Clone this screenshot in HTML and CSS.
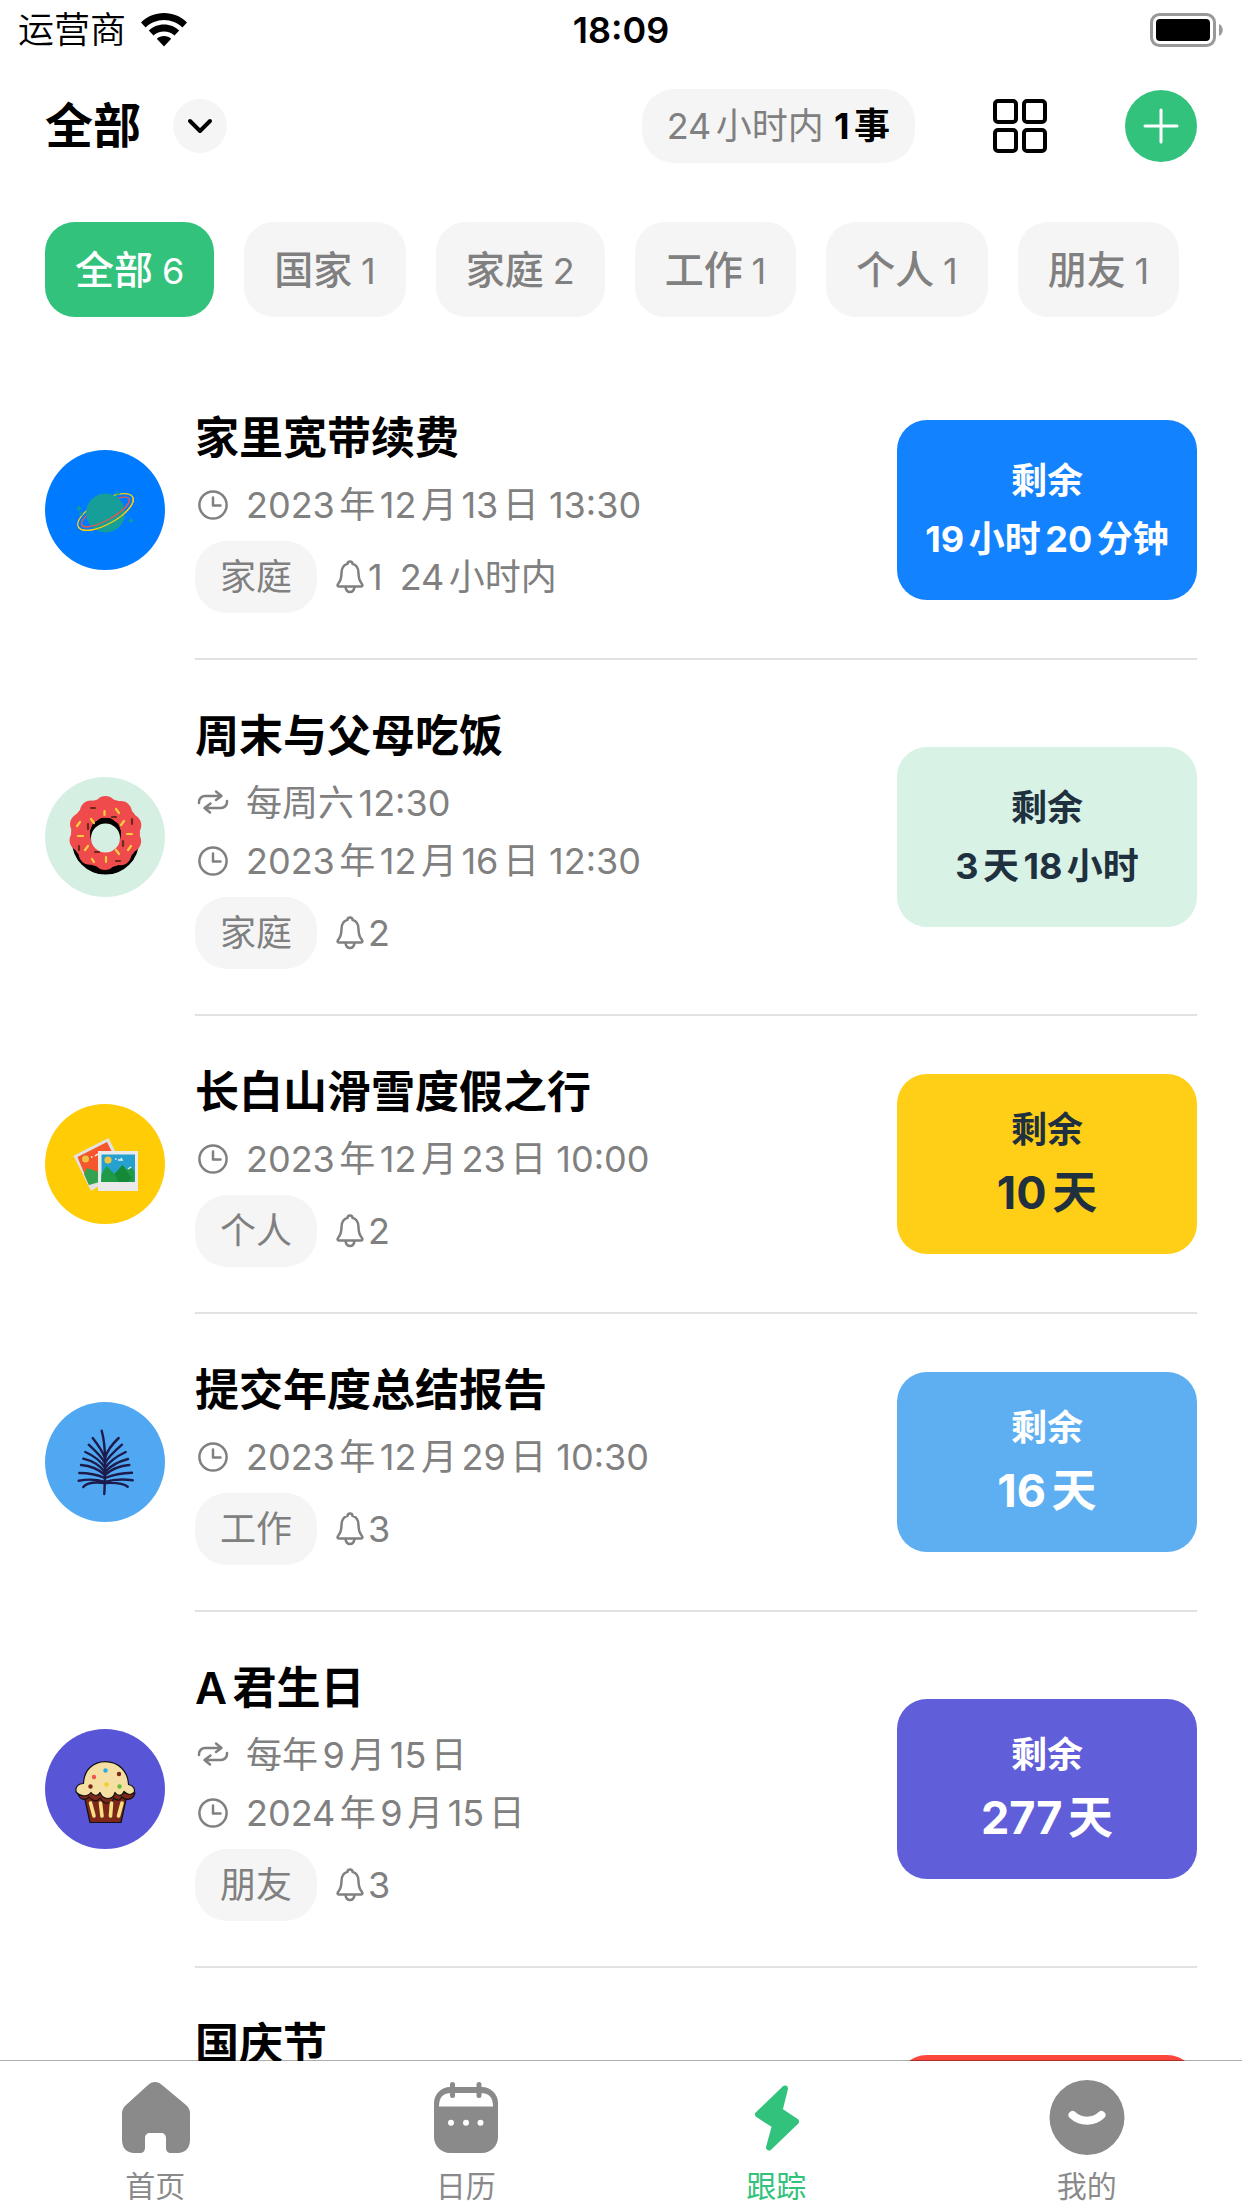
FILE: index.html
```html
<!DOCTYPE html>
<html lang="zh-CN">
<head>
    <meta charset="UTF-8">
    <meta name="viewport" content="width=device-width, initial-scale=1.0">
    <title>跟踪</title>
    <link rel="stylesheet" href="styles.css">
</head>
<body>
    <!-- shared icons -->
    <svg class="sprite" xmlns="http://www.w3.org/2000/svg">
        <symbol id="clock" viewBox="0 0 36 36"><circle cx="18" cy="18" r="13.6"/><path d="M18 10.500v8h7.500"/></symbol>
        <symbol id="repeat" viewBox="0 0 36 36"><path d="M4 18v-1a6 6 0 0 1 6-6h16M21 6.500l5.500 4.500-5.500 4M32 16v1a6 6 0 0 1-6 6H10M15.500 18.500L9.500 23l5.500 4.500"/></symbol>
        <symbol id="bell" viewBox="0 0 30 36"><path d="M15 2.500c-1.500 0-2.500 1-2.500 2.400C8.500 6 6.500 9.500 6.500 14c0 6-1 8-3.300 10.700-1 1.200-1 2.800.8 2.800h22c1.800 0 1.800-1.600.8-2.800C24.500 22 23.500 20 23.500 14c0-4.500-2-8-6-9.100 0-1.400-1-2.400-2.500-2.400zM10.500 28c.5 3.500 2 5 4.500 5s4-1.500 4.500-5"/></symbol>
    </svg>

    <div class="app">
        <div class="status-bar">
            <div class="carrier">
                <span>运营商</span>
                <svg width="46" height="34" viewBox="0 0 46 34"><path d="M23 0C14 0 6 3.500 0 9.500l4.600 5C9.500 9.800 16 7 23 7s13.500 2.800 18.400 7.500l4.600-5C40 3.500 32 0 23 0z"/><path d="M23 11.500c-6 0-11.300 2.300-15.200 6l4.700 5c2.800-2.500 6.500-4 10.500-4s7.700 1.500 10.500 4l4.700-5c-3.900-3.700-9.200-6-15.200-6z"/><path d="M23 23c-2.800 0-5.300 1-7.200 2.700L23 33.500l7.200-7.800C28.300 24 25.800 23 23 23z"/></svg>
            </div>
            <time class="time">18:09</time>
            <svg class="battery" width="74" height="34" viewBox="0 0 74 34"><rect x="1.500" y="1.500" width="63" height="31" rx="8" fill="none" stroke="#999" stroke-width="3"/><rect x="6" y="6" width="54" height="22" rx="4"/><path d="M69 11c5 2 5 10 0 12z" fill="#999"/></svg>
        </div>

        <header class="toolbar">
            <h1>全部</h1>
            <button class="expand" aria-label="展开"><svg width="54" height="54" viewBox="0 0 54 54"><path d="M17 22l10 10 10-10"/></svg></button>
            <div class="soon">24小时内 <b>1事</b></div>
            <button class="grid" aria-label="网格"><svg width="54" height="54" viewBox="0 0 54 54"><rect x="2" y="2" width="21" height="21" rx="3"/><rect x="31" y="2" width="21" height="21" rx="3"/><rect x="2" y="31" width="21" height="21" rx="3"/><rect x="31" y="31" width="21" height="21" rx="3"/></svg></button>
            <button class="add" aria-label="添加"><svg width="72" height="72" viewBox="0 0 72 72"><path d="M36 20v32M20 36h32"/></svg></button>
        </header>

        <nav class="filters">
            <button class="active">全部<span>6</span></button>
            <button>国家<span>1</span></button>
            <button>家庭<span>2</span></button>
            <button>工作<span>1</span></button>
            <button>个人<span>1</span></button>
            <button>朋友<span>1</span></button>
        </nav>

        <main class="list">
            <article class="item">
                <svg class="avatar" viewBox="0 0 120 120">
                    <circle cx="60" cy="60" r="60" fill="#007aff"/>
                    <g fill="none" stroke-width="1.300" transform="rotate(-29 60.500 62)">
                        <ellipse cx="60.500" cy="62" rx="31" ry="12" stroke="#ffcc00"/>
                        <ellipse cx="60.500" cy="62" rx="27" ry="8" stroke="#e05a4e"/>
                    </g>
                    <circle cx="60.500" cy="63" r="19.500" fill="#169e98"/>
                    <g fill="none" stroke-width="1.300" transform="rotate(-29 60.500 62)">
                        <path d="M29.500 62a31 12 0 0 0 62 0" stroke="#ffcc00"/>
                        <path d="M33.500 62a27 8 0 0 0 54 0" stroke="#e05a4e"/>
                    </g>
                    <path d="M72.500 41v5M70 43.500h5M34 56v5M31.500 58.500h5M36 62v4M34 64h4M86 68v5M83.500 70.500h5" stroke="#169e98" stroke-width="1.500"/>
                </svg>
                <div class="detail">
                    <h2>家里宽带续费</h2>
                    <p><svg><use href="#clock"/></svg>2023年12月13日 13:30</p>
                    <div class="tags"><span class="tag">家庭</span><svg><use href="#bell"/></svg>1<span class="within">24小时内</span></div>
                </div>
                <div class="remain blue">剩余<span>19小时20分钟</span></div>
            </article>

            <article class="item">
                <svg class="avatar" viewBox="0 0 120 120">
                    <circle cx="60" cy="60" r="60" fill="#d5f0e3"/>
                    <g fill="none" stroke="#000">
                        <circle cx="60.500" cy="64" r="23.500" stroke-width="20"/>
                        <circle cx="60.500" cy="64" r="24.500" stroke-width="18" stroke-linecap="round" stroke-dasharray="0 15.394"/>
                        <circle cx="60.500" cy="59" r="19" stroke-width="10"/>
                    </g>
                    <g fill="none" stroke="#f04b4c">
                        <circle cx="60.500" cy="56" r="25" stroke-width="19"/>
                        <circle cx="60.500" cy="56" r="26" stroke-width="22" stroke-linecap="round" stroke-dasharray="0 16.336" transform="rotate(-90 60.500 56)"/>
                    </g>
                    <circle cx="60.500" cy="57" r="15.500" fill="#000"/>
                    <circle cx="60.500" cy="61" r="14.500" fill="#d5f0e3"/>
                    <g fill="none" stroke-width="2.200" stroke-linecap="round">
                        <path d="M59.500 34v4M71 32l3 4M46 42l3 4M35 45l-3 4M79 44l-3 4M33 59h5M82 57h5M43 69l-3 4M71 73l3 4M61 80v5M86 69l-3 4M47 82l2 3" stroke="#f3cf3e"/>
                        <path d="M46 31h4M67 40h4M43 47v5M87 42v5M78 64v5M34 69v4M50 75h4M71 84h4" stroke="#6b2a1c"/>
                    </g>
                </svg>
                <div class="detail">
                    <h2>周末与父母吃饭</h2>
                    <p><svg><use href="#repeat"/></svg>每周六12:30</p>
                    <p><svg><use href="#clock"/></svg>2023年12月16日 12:30</p>
                    <div class="tags"><span class="tag">家庭</span><svg><use href="#bell"/></svg>2</div>
                </div>
                <div class="remain mint">剩余<span>3天18小时</span></div>
            </article>

            <article class="item">
                <svg class="avatar" viewBox="0 0 120 120">
                    <circle cx="60" cy="60" r="60" fill="#ffcc05"/>
                    <path d="M28.500 51.700L63.500 34l16 32-33.500 21z" fill="#e2e2e2"/>
                    <path d="M32.500 53L62 38l9 18-27 25z" fill="#f5562b"/>
                    <path d="M42 64l12 4 4 9-14 4-5-11z" fill="#33a351"/>
                    <circle cx="40.500" cy="55" r="3.500" fill="#f0c443"/>
                    <path d="M46 53h1.500M50 52l3-2" stroke="#fff" stroke-width="1.500"/>
                    <rect x="53" y="47" width="40" height="40" fill="#eaeaea"/>
                    <rect x="56.500" y="50.500" width="33.500" height="27.500" fill="#25a0cf"/>
                    <path d="M56.500 70l5-8 8 8 4-4 4-5 5 5 3-3 4 4v11h-33.500z" fill="#1f9a47"/>
                    <path d="M69.500 70l8-9 9 13-4 4h-9z" fill="#148a38"/>
                    <circle cx="63" cy="56" r="3.600" fill="#f0c443"/>
                    <path d="M70 55h1.500M73 56h4l-1-2M83 65l3-2" stroke="#e8f4fa" stroke-width="1.500" fill="none"/>
                </svg>
                <div class="detail">
                    <h2>长白山滑雪度假之行</h2>
                    <p><svg><use href="#clock"/></svg>2023年12月23日 10:00</p>
                    <div class="tags"><span class="tag">个人</span><svg><use href="#bell"/></svg>2</div>
                </div>
                <div class="remain yellow">剩余<span class="big">10天</span></div>
            </article>

            <article class="item">
                <svg class="avatar" viewBox="0 0 120 120">
                    <circle cx="60" cy="60" r="60" fill="#50a8f2"/>
                    <g fill="none" stroke="#1d1b4b" stroke-width="2.400" stroke-linecap="round">
                        <path d="M56.700 28.700C59 37 60 45 60 58c0 12 0 22-.7 34"/>
                        <path d="M47.700 36Q57 48 60 56M43.700 42.700Q56 54 60 61M40.300 50Q54 56 60 66M38.300 56.700Q52 60 60 70M36 63Q50 64 60 73M34.300 71Q48 71 60 76M33.700 78.700Q48 76 60 80M38.300 85Q43 79 60 81"/>
                        <path d="M73.700 36Q63 46 60 56M77 42.700Q64 54 60 61M80.700 50Q66 57 60 66M83 57Q68 61 60 70M84.300 63Q70 64 60 73M87 70.700Q72 71 60 76M87.700 78.300Q72 76 60 80M82.700 84.700Q77 80 60 81"/>
                    </g>
                </svg>
                <div class="detail">
                    <h2>提交年度总结报告</h2>
                    <p><svg><use href="#clock"/></svg>2023年12月29日 10:30</p>
                    <div class="tags"><span class="tag">工作</span><svg><use href="#bell"/></svg>3</div>
                </div>
                <div class="remain sky">剩余<span class="big">16天</span></div>
            </article>

            <article class="item">
                <svg class="avatar" viewBox="0 0 120 120">
                    <circle cx="60" cy="60" r="60" fill="#5856d6"/>
                    <g stroke="#111" stroke-width="1.200" stroke-linejoin="round">
                        <path d="M39 66l6 27.500h31L82 66z" fill="#7c2719"/>
                        <path d="M33 64c1 7 8 8 11 4 4 5 8 5 11 1 4 7 11 7 14 0 3 3 6 3 8-1 4 4 11 3 13-4z" fill="#7c2719"/>
                        <path d="M38.500 54.500C39 41 48 32.700 60.500 32.700S83 42 83.500 55.500c5 1 7 5 5.500 8-3 3-7 2-10-1-2 5-6 5-9 1-2 8-12 8-15 0-2 4-6 4-9 0-4 5-11 4-14.500 0-2-4 1-9 7-9z" fill="#f6dfa2"/>
                    </g>
                    <path d="M45.500 74l3.500 13M55.500 74l1.500 13M66.500 74l-1 13M77 74l-3.500 13" stroke="#f8df82" stroke-width="3.600" stroke-linecap="round"/>
                    <circle cx="49" cy="48" r="2.200" fill="#f2564e"/><circle cx="60.500" cy="41.500" r="2.200" fill="#28aee4"/>
                    <circle cx="74" cy="45" r="2.200" fill="#7c2719"/><circle cx="45.500" cy="57.500" r="2.200" fill="#7c2719"/>
                    <circle cx="61.500" cy="55.500" r="2.200" fill="#f2cf27"/><circle cx="74.500" cy="57.500" r="2.200" fill="#69bd32"/>
                </svg>
                <div class="detail">
                    <h2>A君生日</h2>
                    <p><svg><use href="#repeat"/></svg>每年9月15日</p>
                    <p><svg><use href="#clock"/></svg>2024年9月15日</p>
                    <div class="tags"><span class="tag">朋友</span><svg><use href="#bell"/></svg>3</div>
                </div>
                <div class="remain purple">剩余<span class="big">277天</span></div>
            </article>

            <article class="item">
                <svg class="avatar" viewBox="0 0 120 120"><circle cx="60" cy="60" r="60" fill="#ff3b30"/></svg>
                <div class="detail">
                    <h2>国庆节</h2>
                    <p></p>
                    <p></p>
                    <div class="tags"></div>
                </div>
                <div class="remain red"></div>
            </article>
        </main>

        <nav class="tab-bar">
            <a href="#">
                <svg viewBox="0 0 76 76"><path d="M31 5c4-4 10-4 14 0l24 20c3 3 4 5 4 9v26c0 8-5 13-12 13h-7c-3 0-5-2-5-5V58c0-3-2-5-5-5H33c-3 0-5 2-5 5v10c0 3-2 5-5 5h-6C10 73 5 68 5 60V34c0-4 1-6 4-9z"/></svg>
                <span>首页</span>
            </a>
            <a href="#">
                <svg viewBox="0 0 76 76"><rect x="6" y="7" width="64" height="66" rx="16"/><path d="M11 26.500C11 17 15 13 24 13h28c9 0 13 4 13 13.500z" fill="#fff"/><rect x="22" y="2" width="5" height="16" rx="2.500"/><rect x="48.500" y="2" width="5" height="16" rx="2.500"/><g fill="#fff"><circle cx="23" cy="42.700" r="3"/><circle cx="38" cy="42.700" r="3"/><circle cx="52.500" cy="42.700" r="3"/></g></svg>
                <span>日历</span>
            </a>
            <a href="#" class="active">
                <svg viewBox="0 0 76 76"><path d="M47 8.500L20 34.500 37 45.500 31 67.500 58 41.500 41.500 30.500z" stroke="currentColor" stroke-width="6" stroke-linejoin="round"/></svg>
                <span>跟踪</span>
            </a>
            <a href="#">
                <svg viewBox="0 0 76 76"><circle cx="38" cy="37.500" r="37.500"/><path d="M23.500 35c8 7.500 21 7.500 29 0" fill="none" stroke="#fff" stroke-width="8" stroke-linecap="round"/></svg>
                <span>我的</span>
            </a>
        </nav>
    </div>
</body>
</html>
```

FILE: styles.css
```css
:root {
    --green: #32c27c;
    --grey: #808080;
    --chip: #f5f5f5;
    --dark: #1f303e;
}

* {
    box-sizing: border-box;
    margin: 0;
    padding: 0;
}

body {
    background: #fff;
    color: #000;
    font-family: Inter, "Noto Sans CJK SC", sans-serif;
    font-size: 36px;
    text-autospace: normal;
}

button {
    border: none;
    font: inherit;
    cursor: pointer;
}

.sprite {
    display: none;
}

.app {
    display: flex;
    flex-direction: column;
    height: 100vh;
}

.status-bar {
    display: grid;
    grid-template-columns: 1fr auto 1fr;
    align-items: center;
    flex: none;
    height: 60px;
    padding: 0 18px;
    line-height: 60px;
}
.carrier {
    display: flex;
    align-items: center;
    gap: 15px;
    font-weight: 350;
}
.time {
    font-weight: 600;
}
.battery {
    justify-self: end;
}

.toolbar {
    display: flex;
    align-items: center;
    flex: none;
    height: 132px;
    padding: 0 45px;
}
.toolbar h1 {
    font-size: 48px;
    font-weight: 700;
    line-height: 72px;
}
.toolbar svg {
    display: block;
    fill: none;
    stroke: #000;
    stroke-width: 4;
    stroke-linecap: round;
    stroke-linejoin: round;
}
.expand {
    margin-left: 32px;
    border-radius: 50%;
    background: var(--chip);
}
.soon {
    margin-left: auto;
    padding: 0 25px;
    border-radius: 32px;
    background: var(--chip);
    color: var(--grey);
    line-height: 74px;
}
.soon b {
    color: #000;
}
.grid {
    margin: 0 78px;
    background: none;
}
.add {
    border-radius: 50%;
    background: var(--green);
}
.toolbar .add svg {
    stroke: #fff;
    stroke-width: 3;
}

.filters {
    display: flex;
    flex: none;
    gap: 30px;
    padding: 30px 45px 45px;
    overflow: hidden;
}
.filters button {
    flex: none;
    height: 95px;
    padding: 0 30px;
    border-radius: 30px;
    background: var(--chip);
    color: var(--grey);
    font-size: 39px;
    font-weight: 500;
    line-height: 95px;
}
.filters span {
    margin-left: 4px;
    font-size: 36px;
    font-weight: 400;
}
.filters .active {
    background: var(--green);
    color: #fff;
}

.list {
    flex: 1;
    min-height: 0;
    overflow: hidden;
    padding: 0 45px;
}
.item {
    display: grid;
    grid-template-columns: 120px 1fr 300px;
    column-gap: 30px;
    align-items: center;
    position: relative;
    padding: 45px 0 47px;
}
/* divider starts under the title, not under the avatar */
.item::after {
    content: "";
    position: absolute;
    left: 150px;
    right: 0;
    bottom: 0;
    height: 2px;
    background: #e2e2e2;
}
.avatar {
    width: 120px;
    height: 120px;
}
.detail {
    color: var(--grey);
}
.detail h2 {
    margin-bottom: 7px;
    color: #000;
    font-size: 44px;
    font-weight: 600;
    line-height: 62px;
}
.detail p {
    display: flex;
    align-items: center;
    height: 58px;
    line-height: 58px;
}
.detail svg {
    width: 36px;
    height: 36px;
    fill: none;
    stroke: var(--grey);
    stroke-width: 2.5;
    stroke-linecap: round;
    stroke-linejoin: round;
}
.detail p svg {
    margin-right: 15px;
}
.tags {
    display: flex;
    align-items: center;
    height: 72px;
    margin-top: 7px;
    line-height: 72px;
}
.tag {
    margin-right: 18px;
    padding: 0 25px;
    border-radius: 32px;
    background: var(--chip);
}
.tags svg {
    width: 30px;
    margin-right: 3px;
}
.within {
    margin-left: 17px;
}

.remain {
    display: flex;
    flex-direction: column;
    align-items: center;
    justify-content: center;
    height: 180px;
    border-radius: 30px;
    color: #fff;
    font-weight: 700;
    line-height: 58px;
    white-space: nowrap;
}
.remain .big {
    font-size: 45px;
    line-height: 68px;
}
.blue { background: #1282ff; }
.mint { background: #d8f2e5; color: var(--dark); }
.yellow { background: #ffcf18; color: var(--dark); }
.sky { background: #5eaff2; }
.purple { background: #605ed8; }
.red { background: #ff463c; }

.tab-bar {
    display: flex;
    flex: none;
    position: relative;
    margin-top: -1px;
    border-top: 1px solid rgba(0, 0, 0, 0.32);
    background: #fff;
    background-clip: padding-box;
}
.tab-bar a {
    display: flex;
    flex: 1;
    flex-direction: column;
    align-items: center;
    gap: 12px;
    padding: 19px 0 4px;
    color: #8a8a8a;
    font-size: 30px;
    line-height: 36px;
    text-decoration: none;
}
.tab-bar svg {
    width: 76px;
    height: 76px;
    fill: currentColor;
}
.tab-bar .active {
    color: var(--green);
}
```
